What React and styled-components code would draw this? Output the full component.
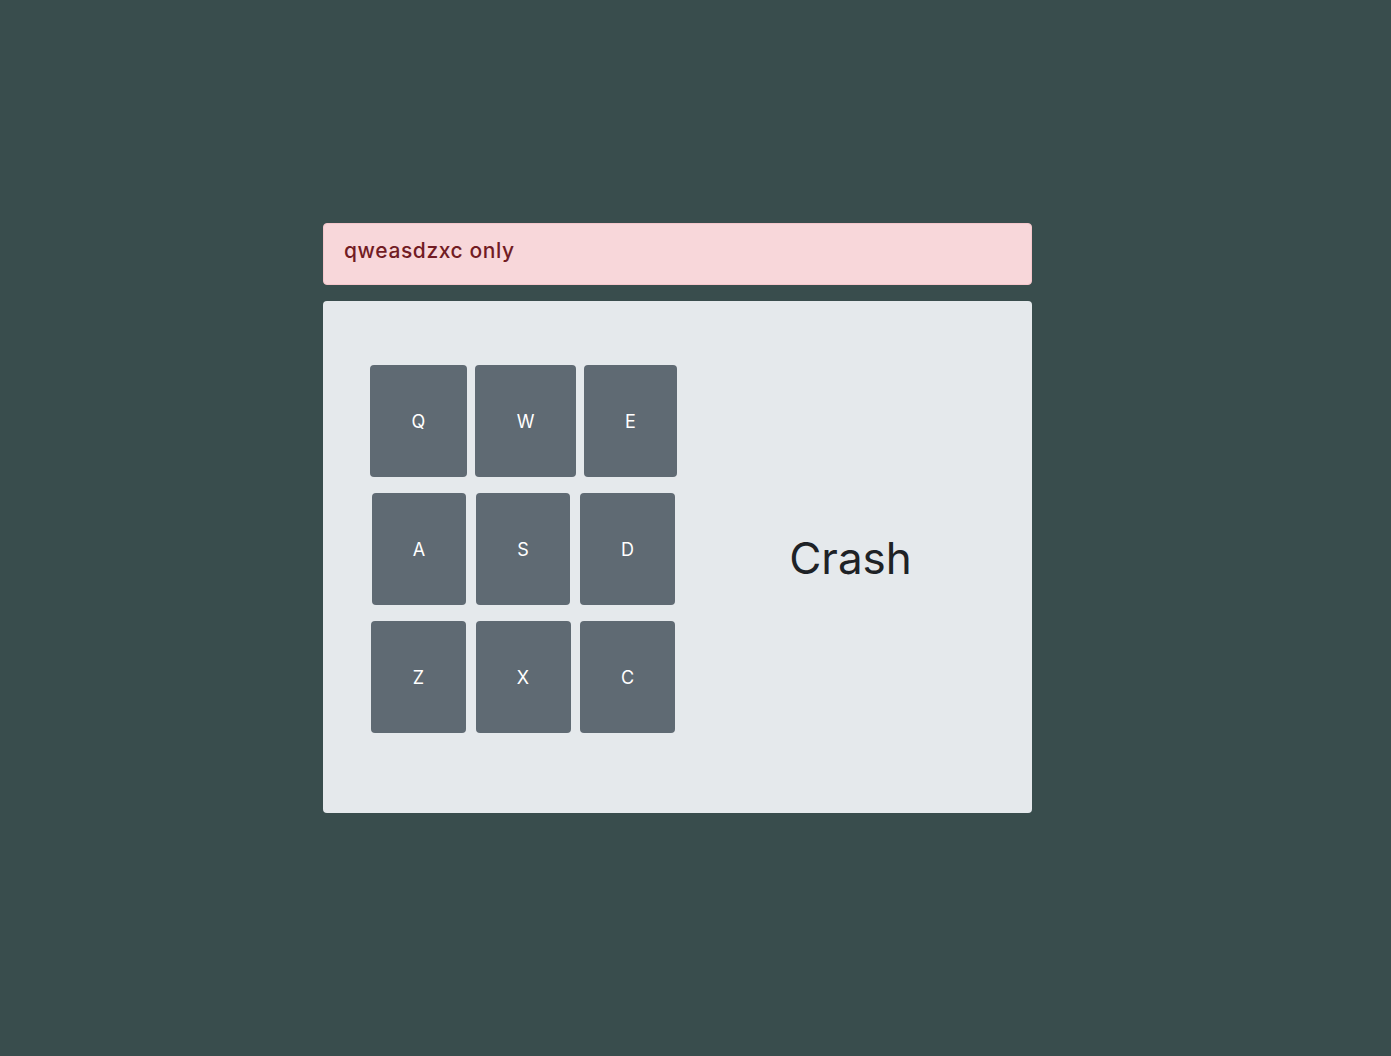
import React from 'react';
import styled, { createGlobalStyle } from 'styled-components';

const GlobalStyle = createGlobalStyle`
    body {
        margin: 0;
        background-color: #394d4d;
        font-family: Inter, "Noto Sans", "Liberation Sans", sans-serif;
    }
`

const Page = styled.div`
    min-height: 1056px;
    display: flex;
    padding: 223px 0 0 323px;
    box-sizing: border-box;
`

const Column = styled.div`
    width: 709px;
    display: flex;
    flex-direction: column;
    gap: 16px;
`

const Alert = styled.div`
    height: 62px;
    box-sizing: border-box;
    background-color: #f8d7da;
    border: 1px solid #f5c6cb;
    border-radius: 4px;
    color: #721c24;
    font-size: 21px;
    font-weight: 500;
    letter-spacing: 0.6px;
    padding: 13px 20px;
    line-height: 28px;
`

const Machine = styled.div`
    height: 512px;
    box-sizing: border-box;
    background-color: #e5e9ec;
    border-radius: 4px;
    display: flex;
    padding: 64px 0 80px 47px;
`

const PadGrid = styled.div`
    display: flex;
    flex-direction: column;
    gap: 16px;
    width: 307px;
`

const PadRow = styled.div`
    display: flex;
    gap: ${p => p.gap}px;
    padding-left: ${p => p.offset}px;
`

const Pad = styled.button`
    width: ${p => p.w}px;
    height: 112px;
    border: 0;
    border-radius: 4px;
    background-color: #5f6a73;
    color: #fff;
    font-family: inherit;
    font-size: 18px;
    cursor: pointer;
    padding: 0;
`

const Display = styled.div`
    flex: 1;
    display: flex;
    align-items: center;
    justify-content: center;
    margin-top: 17px;
    padding-right: 8px;
    font-size: 44px;
    color: #1e2226;
`

const rows = [
    { offset: 0, gap: 8, keys: [['Q', 97], ['W', 101], ['E', 93]] },
    { offset: 2, gap: 10, keys: [['A', 94], ['S', 94], ['D', 95]] },
    { offset: 1, gap: 9.5, keys: [['Z', 95], ['X', 95], ['C', 95]] },
]

const App = () => {
    return (
        <>
            <GlobalStyle />
            <Page>
                <Column>
                    <Alert>qweasdzxc only</Alert>
                    <Machine>
                        <PadGrid>
                            {rows.map((row, i) => (
                                <PadRow key={i} gap={row.gap} offset={row.offset}>
                                    {row.keys.map(([k, w]) => (
                                        <Pad key={k} w={w}>{k}</Pad>
                                    ))}
                                </PadRow>
                            ))}
                        </PadGrid>
                        <Display>Crash</Display>
                    </Machine>
                </Column>
            </Page>
        </>
    )
}

export default App
